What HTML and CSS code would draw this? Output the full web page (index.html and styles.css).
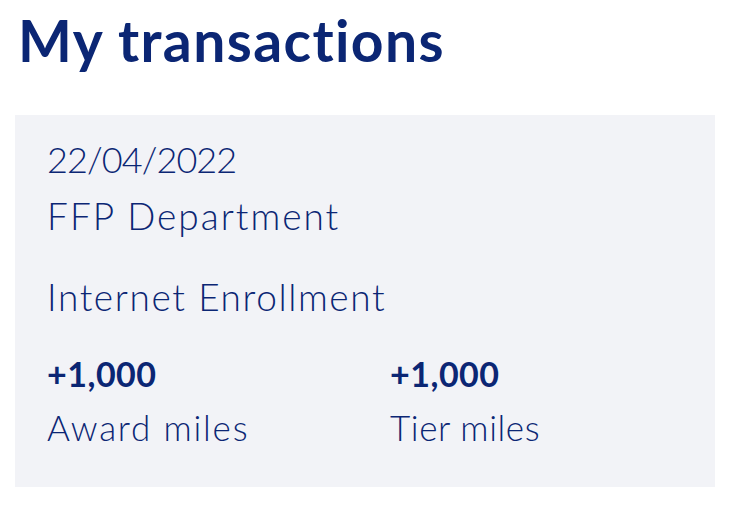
FILE: index.html
```html
<!DOCTYPE html>
<html lang="en">
<head>
    <meta charset="UTF-8">
    <meta name="viewport" content="width=device-width, initial-scale=1.0">
    <title>My transactions</title>
    <link rel="stylesheet" href="styles.css">
</head>
<body>
    <h1 class="page-title">My transactions</h1>

    <div class="transaction-card">
        <div class="transaction-date">22/04/2022</div>
        <div class="transaction-partner">FFP Department</div>
        <div class="transaction-label">Internet Enrollment</div>

        <div class="transaction-miles">
            <div class="miles-item">
                <div class="miles-value">+1,000</div>
                <div class="miles-type award">Award miles</div>
            </div>
            <div class="miles-item">
                <div class="miles-value">+1,000</div>
                <div class="miles-type tier">Tier miles</div>
            </div>
        </div>
    </div>
</body>
</html>
```

FILE: styles.css
```css
* {
    margin: 0;
    padding: 0;
    box-sizing: border-box;
}

body {
    font-family: Lato, 'Open Sans', sans-serif;
    background: #ffffff;
    color: #0b2674;
    width: 748px;
}

.page-title {
    font-size: 57px;
    font-weight: 700;
    line-height: 68px;
    letter-spacing: 1.4px;
    margin: 6px 0 0 18px;
}

.transaction-card {
    background: #f2f3f7;
    width: 700px;
    margin: 41px 0 0 15px;
    padding: 22px 32px 38px;
    font-weight: 300;
}

.transaction-date {
    font-size: 36px;
    line-height: 44px;
    letter-spacing: -0.9px;
}

.transaction-partner {
    font-size: 37px;
    line-height: 44px;
    margin-top: 13px;
    letter-spacing: 2px;
}

.transaction-label {
    font-size: 37px;
    line-height: 44px;
    margin-top: 37px;
    letter-spacing: 1.6px;
}

.transaction-miles {
    display: grid;
    grid-template-columns: 343px 1fr;
    margin-top: 33px;
}

.miles-value {
    font-size: 34px;
    font-weight: 700;
    line-height: 44px;
    letter-spacing: 0.5px;
}

.miles-type {
    font-size: 35px;
    line-height: 44px;
    margin-top: 9px;
}

.miles-type.award {
    letter-spacing: 1.8px;
}

.miles-type.tier {
    letter-spacing: 0.6px;
}
```
